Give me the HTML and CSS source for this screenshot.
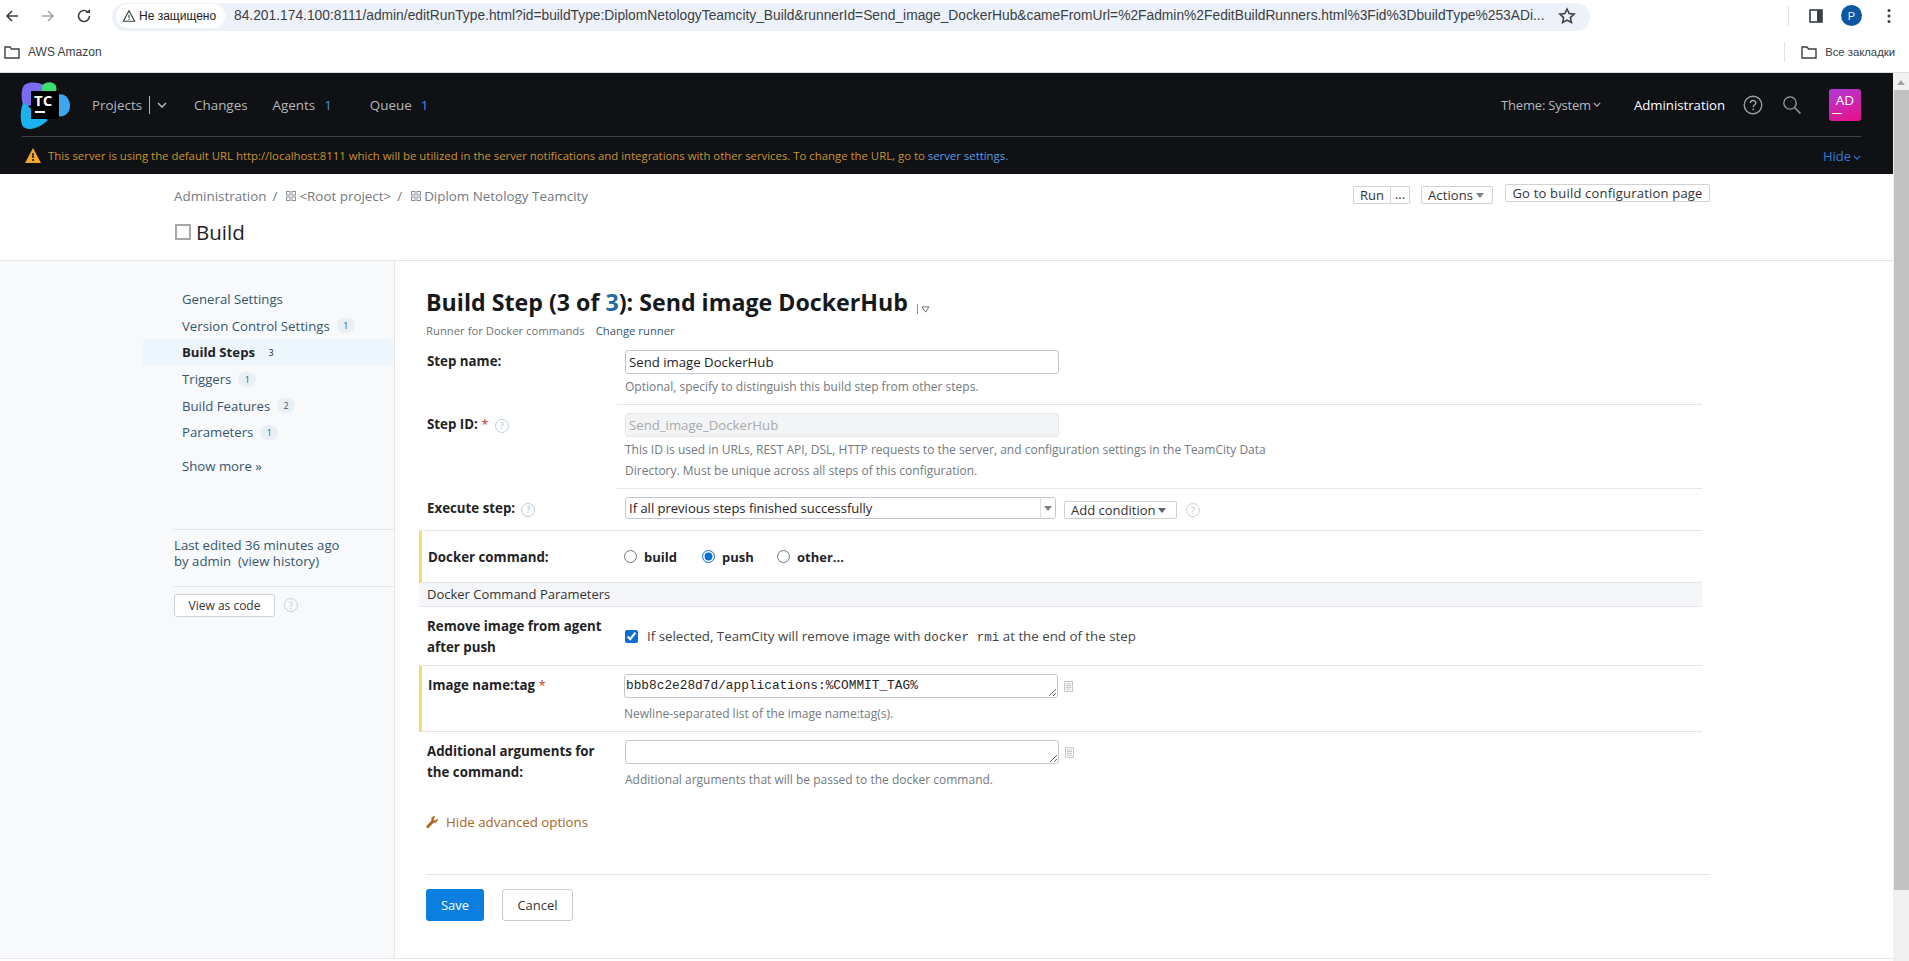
FILE: index.html
```html
<!DOCTYPE html>
<html lang="en">
<head>
    <meta charset="UTF-8">
    <meta name="viewport" content="width=device-width, initial-scale=1.0">
    <title>Build Step - TeamCity</title>
    <link rel="stylesheet" href="styles.css">
</head>
<body>
    <!-- Browser toolbar -->
    <div class="toolbar">
        <svg class="tool-icon back" viewBox="0 0 16 16"><path d="M14 8H3M8 3 3 8l5 5" fill="none" stroke="#3c4043" stroke-width="1.6"/></svg>
        <svg class="tool-icon forward" viewBox="0 0 16 16"><path d="M2 8h11M8 3l5 5-5 5" fill="none" stroke="#a5a8ac" stroke-width="1.6"/></svg>
        <svg class="tool-icon reload" viewBox="0 0 16 16"><path d="M13.5 8A5.5 5.5 0 1 1 11.8 4" fill="none" stroke="#3c4043" stroke-width="1.6"/><path d="M9.5 5h4.5V1z" fill="#3c4043"/></svg>
        <div class="omnibox">
            <div class="chip">
                <svg class="chip-icon" viewBox="0 0 16 16"><path d="M8 2 1.500 14h13zM8 6.500v4M8 11.500v1.200" fill="none" stroke="#3c4043" stroke-width="1.300"/></svg>
                <span>Не защищено</span>
            </div>
            <span class="url">84.201.174.100:8111/admin/editRunType.html?id=buildType:DiplomNetologyTeamcity_Build&amp;runnerId=Send_image_DockerHub&amp;cameFromUrl=%2Fadmin%2FeditBuildRunners.html%3Fid%3DbuildType%253ADi...</span>
            <svg class="star" viewBox="0 0 16 16"><path d="m8 1.800 1.900 4.100 4.400.5-3.300 3 .9 4.400L8 11.600l-3.900 2.200.9-4.400-3.300-3 4.400-.5z" fill="none" stroke="#3c4043" stroke-width="1.400"/></svg>
        </div>
        <div class="tool-sep"></div>
        <svg class="panel-icon" viewBox="0 0 16 16"><rect x="2" y="2" width="12" height="12" fill="none" stroke="#3c4043" stroke-width="1.600"/><rect x="9" y="2" width="5" height="12" fill="#3c4043"/></svg>
        <div class="profile">P</div>
        <svg class="dots" viewBox="0 0 4 16"><circle cx="2" cy="2.500" r="1.500"/><circle cx="2" cy="8" r="1.500"/><circle cx="2" cy="13.500" r="1.500"/></svg>
    </div>

    <!-- Bookmarks -->
    <div class="bookmarks">
        <svg class="folder" viewBox="0 0 16 14"><path d="M1 2h5l1.500 2H15v9H1z" fill="none" stroke="#3c4043" stroke-width="1.400"/></svg>
        <span class="bookmark-text">AWS Amazon</span>
        <div class="bookmarks-right">
            <div class="bookmark-sep"></div>
            <svg class="folder" viewBox="0 0 16 14"><path d="M1 2h5l1.500 2H15v9H1z" fill="none" stroke="#3c4043" stroke-width="1.400"/></svg>
            <span class="bookmark-text all">Все закладки</span>
        </div>
    </div>

    <div class="viewport">
        <div class="page">
            <!-- Dark header -->
            <header class="header">
                <div class="nav">
                    <div class="logo">
                        <svg class="logo-blobs" viewBox="0 0 50 48">
                            <path d="M3 5C5 0 15-1 24 3V20L4 25C1 18 1 10 3 5Z" fill="#7a6cf0"/>
                            <path d="M22 4C25-1 34-1 36 4 37 8 36 11 34 12H22Z" fill="#3fdc6e"/>
                            <path d="M37 13C44 10 50 16 50 24 50 31 44 36 37 34Z" fill="#3ba7ee"/>
                            <path d="M2 24 4 20 14 30 28 38C22 44 12 49 5 46 0 44 0 32 2 24Z" fill="#19b3f0"/>
                        </svg>
                        <div class="logo-box">
                            <span class="logo-text">TC</span>
                            <span class="logo-dash"></span>
                        </div>
                    </div>
                    <a class="nav-link projects">Projects</a>
                    <span class="nav-bar"></span>
                    <svg class="nav-chevron" viewBox="0 0 10 6"><path d="m1 1 4 4 4-4" fill="none" stroke="#b4b8bd" stroke-width="1.500"/></svg>
                    <a class="nav-link changes">Changes</a>
                    <a class="nav-link agents">Agents</a>
                    <span class="nav-count">1</span>
                    <a class="nav-link queue">Queue</a>
                    <span class="nav-count">1</span>
                    <div class="nav-right">
                        <a class="nav-link theme">Theme: System</a>
                        <svg class="theme-chevron" viewBox="0 0 10 6"><path d="m1 1 4 4 4-4" fill="none" stroke="#b4b8bd" stroke-width="1.400"/></svg>
                        <a class="nav-admin">Administration</a>
                        <svg class="help-icon" viewBox="0 0 20 20"><circle cx="10" cy="10" r="8.800" fill="none" stroke="#9a9ea3" stroke-width="1.400"/><path d="M7.400 8c0-3.400 5.400-3.400 5.400 0 0 2-2.600 2-2.600 4M10.200 13.600v1.600" fill="none" stroke="#9a9ea3" stroke-width="1.500"/></svg>
                        <svg class="search-icon" viewBox="0 0 20 20"><circle cx="8" cy="8" r="6.200" fill="none" stroke="#9a9ea3" stroke-width="1.300"/><path d="m12.500 12.500 6 6" stroke="#9a9ea3" stroke-width="1.500"/></svg>
                        <div class="avatar"><span>AD</span><i></i></div>
                    </div>
                </div>
                <div class="notice">
                    <svg class="notice-icon" viewBox="0 0 16 15"><path d="M8 0 16 15H0z" fill="#f2a72e"/><path d="M8 5v5M8 11v2" stroke="#1a1408" stroke-width="1.500"/></svg>
                    <span class="notice-text">This server is using the default URL http://localhost:8111 which will be utilized in the server notifications and integrations with other services. To change the URL, go to <a class="notice-link">server settings.</a></span>
                    <a class="notice-hide">Hide<svg class="hide-chevron" viewBox="0 0 10 6"><path d="m1 1 4 4 4-4" fill="none" stroke="#2f7bd8" stroke-width="1.400"/></svg></a>
                </div>
            </header>

            <!-- Breadcrumbs and title -->
            <section class="top">
                <div class="top-left">
                    <div class="crumbs">
                        <a>Administration</a><span class="slash">/</span>
                        <svg class="crumb-icon" viewBox="0 0 10 10"><g fill="none" stroke="#8b9299"><rect x=".5" y=".5" width="3.500" height="3.500"/><rect x="6" y=".5" width="3.500" height="3.500"/><rect x=".5" y="6" width="3.500" height="3.500"/><rect x="6" y="6" width="3.500" height="3.500"/></g></svg>
                        <a>&lt;Root project&gt;</a><span class="slash">/</span>
                        <svg class="crumb-icon" viewBox="0 0 10 10"><g fill="none" stroke="#8b9299"><rect x=".5" y=".5" width="3.500" height="3.500"/><rect x="6" y=".5" width="3.500" height="3.500"/><rect x=".5" y="6" width="3.500" height="3.500"/><rect x="6" y="6" width="3.500" height="3.500"/></g></svg>
                        <a>Diplom Netology Teamcity</a>
                    </div>
                    <h1 class="title"><span class="title-box"></span>Build</h1>
                </div>
                <div class="top-actions">
                    <div class="btn-group">
                        <span class="btn-small run">Run</span><span class="btn-small more">...</span>
                    </div>
                    <span class="btn-small actions">Actions<i class="caret"></i></span>
                    <span class="btn-small goto">Go to build configuration page</span>
                </div>
            </section>

            <div class="content">
                <!-- Sidebar -->
                <aside class="sidebar">
                    <ul class="side-menu">
                        <li><a>General Settings</a></li>
                        <li><a>Version Control Settings</a><span class="count">1</span></li>
                        <li class="active"><a>Build Steps</a><span class="count">3</span></li>
                        <li><a>Triggers</a><span class="count">1</span></li>
                        <li><a>Build Features</a><span class="count">2</span></li>
                        <li><a>Parameters</a><span class="count">1</span></li>
                    </ul>
                    <a class="show-more">Show more »</a>
                    <div class="edited">
                        <div>Last edited 36 minutes ago</div>
                        <div>by admin &nbsp;<a>(view history)</a></div>
                    </div>
                    <div class="code-row">
                        <span class="code-btn">View as code</span>
                        <span class="q light">?</span>
                    </div>
                </aside>

                <!-- Form -->
                <main class="main">
                    <h2 class="step-title">Build Step (3 of <span class="blue">3</span>): Send image DockerHub<span class="title-menu"><i></i><svg class="tri" viewBox="0 0 10 8"><path d="M1 1h8L5 7z" fill="none" stroke="#5a6a78"/></svg></span></h2>
                    <div class="runner"><span>Runner for Docker commands</span><a>Change runner</a></div>

                    <div class="form">
                        <div class="row row-name">
                            <div class="label">Step name:</div>
                            <div class="field lined">
                                <input class="text" type="text" value="Send image DockerHub">
                                <div class="hint">Optional, specify to distinguish this build step from other steps.</div>
                            </div>
                        </div>
                        <div class="row row-id">
                            <div class="label">Step ID: <span class="req">*</span><span class="q">?</span></div>
                            <div class="field lined">
                                <input class="text" type="text" value="Send_image_DockerHub" disabled>
                                <div class="hint">This ID is used in URLs, REST API, DSL, HTTP requests to the server, and configuration settings in the TeamCity Data Directory. Must be unique across all steps of this configuration.</div>
                            </div>
                        </div>
                        <div class="row row-exec">
                            <div class="label">Execute step:<span class="q">?</span></div>
                            <div class="field inline">
                                <div class="select"><span>If all previous steps finished successfully</span><i class="select-arrow"><b class="caret"></b></i></div>
                                <span class="btn-small add">Add condition<i class="caret dark"></i></span>
                                <span class="q">?</span>
                            </div>
                        </div>
                        <div class="row row-cmd marked">
                            <div class="label">Docker command:</div>
                            <div class="field radios">
                                <label class="radio"><input type="radio" name="cmd">build</label>
                                <label class="radio"><input type="radio" name="cmd" checked>push</label>
                                <label class="radio"><input type="radio" name="cmd">other...</label>
                            </div>
                        </div>
                        <div class="section-head">Docker Command Parameters</div>
                        <div class="row row-remove">
                            <div class="label">Remove image from agent after push</div>
                            <label class="field check"><input type="checkbox" checked><span>If selected, TeamCity will remove image with <code>docker rmi</code> at the end of the step</span></label>
                        </div>
                        <div class="row row-image marked">
                            <div class="label">Image name:tag <span class="req">*</span></div>
                            <div class="field">
                                <div class="area-wrap">
                                    <textarea class="area" rows="1">bbb8c2e28d7d/applications:%COMMIT_TAG%</textarea>
                                    <svg class="list-icon" viewBox="0 0 10 12"><path d="M.5.5h9v11h-9zM2 3h6M2 5h6M2 7h6M2 9h6" fill="none" stroke="#b9bec3"/></svg>
                                </div>
                                <div class="hint">Newline-separated list of the image name:tag(s).</div>
                            </div>
                        </div>
                        <div class="row row-args">
                            <div class="label">Additional arguments for the command:</div>
                            <div class="field">
                                <div class="area-wrap">
                                    <textarea class="area" rows="1"></textarea>
                                    <svg class="list-icon" viewBox="0 0 10 12"><path d="M.5.5h9v11h-9zM2 3h6M2 5h6M2 7h6M2 9h6" fill="none" stroke="#b9bec3"/></svg>
                                </div>
                                <div class="hint">Additional arguments that will be passed to the docker command.</div>
                            </div>
                        </div>
                    </div>

                    <a class="advanced">
                        <svg class="wrench" viewBox="0 0 12 13"><path d="M11.600 2.600 9.600 4.500 8 4.200 7.600 2.600 9.500.6C7.600-.2 5.400 1 5.300 3c0 .5 0 1 .2 1.400L.6 10c-.8 1 .6 2.800 1.800 1.900l5.200-5.200c2.400.8 4.800-1.600 4-4.100z" fill="#b5651d"/></svg>
                        Hide advanced options
                    </a>

                    <div class="buttons">
                        <span class="btn-save">Save</span>
                        <span class="btn-cancel">Cancel</span>
                    </div>
                </main>
            </div>
        </div>

        <!-- Scrollbar -->
        <div class="scrollbar">
            <svg class="scroll-up" viewBox="0 0 8 5"><path d="M4 0 8 5H0z" fill="#a3a3a3"/></svg>
            <div class="scroll-thumb"></div>
        </div>
    </div>
</body>
</html>
```
FILE: styles.css
```css
* {
    box-sizing: border-box;
}

html, body {
    margin: 0;
    height: 961px;
    overflow: hidden;
    background: #fff;
}

body {
    font-family: "Open Sans", "Noto Sans", Arial, sans-serif;
    font-size: 12px;
    color: #1f2326;
}

/* browser chrome */
.toolbar {
    height: 31px;
    display: flex;
    align-items: center;
    background: #fff;
    font-family: "Liberation Sans", Arial, sans-serif;
}

.tool-icon {
    width: 16px;
    height: 16px;
    flex: none;
}

.back {
    margin-left: 4px;
}

.forward {
    margin-left: 20px;
}

.reload {
    margin-left: 20px;
}

.omnibox {
    width: 1478px;
    height: 28px;
    margin: 3px 0 0 20px;
    background: #edf2fa;
    border-radius: 14px;
    display: flex;
    align-items: center;
    padding: 0 0 3px 4px;
}

.chip {
    width: 109px;
    height: 24px;
    background: #fff;
    border-radius: 12px;
    display: flex;
    align-items: center;
    gap: 3px;
    padding-left: 6px;
    font-size: 12px;
    color: #202124;
    flex: none;
}

.chip-icon {
    width: 14px;
    height: 14px;
}

.url {
    margin-left: 9px;
    font-size: 13.800px;
    color: #3c4043;
    white-space: nowrap;
    flex: none;
}

.star {
    width: 18px;
    height: 18px;
    margin-left: auto;
    margin-right: 14px;
    flex: none;
}

.tool-sep {
    width: 1px;
    height: 20px;
    background: #e0e2e5;
    margin-left: 198px;
}

.panel-icon {
    width: 16px;
    height: 16px;
    margin-left: 19px;
}

.profile {
    width: 21px;
    height: 21px;
    border-radius: 50%;
    background: #0b57a4;
    color: #e8f0fe;
    font-size: 11px;
    display: flex;
    align-items: center;
    justify-content: center;
    margin-left: 17px;
}

.dots {
    width: 4px;
    height: 16px;
    margin-left: 25px;
    fill: #3c4043;
}

.bookmarks {
    height: 42px;
    display: flex;
    align-items: center;
    padding-left: 4px;
    font-family: "Liberation Sans", Arial, sans-serif;
    border-bottom: 1px solid #dadce0;
}

.folder {
    width: 16px;
    height: 14px;
    flex: none;
}

.bookmark-text {
    margin-left: 8px;
    font-size: 12px;
    color: #3c4043;
    white-space: nowrap;
}

.bookmark-text.all {
    font-size: 11.300px;
}

.bookmarks-right {
    margin-left: auto;
    display: flex;
    align-items: center;
    padding-right: 14px;
}

.bookmark-sep {
    width: 1px;
    height: 20px;
    background: #e0e2e5;
    margin-right: 16px;
}

.viewport {
    height: 888px;
    display: flex;
}

.page {
    width: 1893px;
    flex: none;
}

.scrollbar {
    width: 16px;
    flex: none;
    background: #f1f1f1;
    display: flex;
    flex-direction: column;
    align-items: center;
}

.scroll-up {
    width: 8px;
    height: 5px;
    margin-top: 7px;
}

.scroll-thumb {
    width: 15px;
    height: 800px;
    margin-top: 5px;
    background: #c1c1c1;
}

/* dark header */
.header {
    height: 101px;
    background: #0f1114;
    padding: 0 32px 0 22px;
}

.nav {
    height: 64px;
    display: flex;
    align-items: center;
    border-bottom: 1px solid #3e4145;
    font-size: 13.400px;
}

.logo {
    position: relative;
    width: 50px;
    height: 48px;
    margin-left: -2px;
    margin-top: 2px;
}

.logo-blobs {
    width: 50px;
    height: 48px;
}

.logo-box {
    position: absolute;
    left: 11px;
    top: 9px;
    width: 28px;
    height: 28px;
    background: #000;
    padding: 2px 0 0 3px;
}

.logo-text {
    display: block;
    color: #fff;
    font-size: 15px;
    line-height: 15px;
    font-weight: 700;
}

.logo-dash {
    display: block;
    width: 10px;
    height: 2px;
    margin: 3px 0 0 1px;
    background: #fff;
}

.nav-link {
    color: #b4b8bd;
    white-space: nowrap;
}

.projects {
    margin-left: 22px;
}

.nav-bar {
    width: 1px;
    height: 18px;
    background: #b4b8bd;
    margin-left: 7px;
}

.nav-chevron {
    width: 10px;
    height: 6px;
    margin-left: 7px;
}

.changes {
    margin-left: 27px;
}

.agents {
    margin-left: 25px;
}

.queue {
    margin-left: 38px;
}

.nav-count {
    color: #4a8fe0;
    margin-left: 9px;
}

.nav-right {
    margin-left: auto;
    display: flex;
    align-items: center;
}

.theme {
    font-size: 13px;
    letter-spacing: -.2px;
}

.theme-chevron {
    width: 8px;
    height: 5px;
    margin-left: 2px;
}

.nav-admin {
    color: #fff;
    font-size: 13.200px;
    margin-left: 33px;
    white-space: nowrap;
}

.help-icon {
    width: 20px;
    height: 20px;
    margin-left: 18px;
}

.search-icon {
    width: 20px;
    height: 20px;
    margin-left: 19px;
}

.avatar {
    position: relative;
    width: 32px;
    height: 32px;
    margin-left: 27px;
    border-radius: 3px;
    background: linear-gradient(160deg, #b03ad6, #e80f86);
    color: #fff;
    font-size: 13.500px;
    font-weight: 500;
    text-align: center;
    line-height: 23px;
}

.avatar i {
    position: absolute;
    left: 3px;
    top: 24px;
    width: 10px;
    height: 1px;
    background: #fff;
}

.notice {
    height: 36px;
    display: flex;
    align-items: center;
    font-size: 11.370px;
    padding-left: 3px;
}

.notice-icon {
    width: 16px;
    height: 15px;
    flex: none;
}

.notice-text {
    margin-left: 7px;
    color: #c99333;
    white-space: nowrap;
}

.notice-link {
    color: #5a9be0;
}

.notice-hide {
    margin-left: auto;
    padding-top: 2px;
    color: #2f7bd8;
    font-size: 13px;
    display: flex;
    align-items: center;
}

.hide-chevron {
    width: 8px;
    height: 5px;
    margin-left: 2px;
    margin-top: 2px;
}

/* breadcrumbs */
.top {
    height: 87px;
    display: flex;
    padding-left: 174px;
    border-bottom: 1px solid #e4e6e9;
}

.top-left {
    flex: 1;
}

.crumbs {
    display: flex;
    align-items: center;
    margin-top: 13px;
    height: 18px;
    font-size: 13.400px;
    color: #737a80;
    white-space: nowrap;
}

.slash {
    margin: 0 7px 0 6px;
}

.crumb-icon {
    width: 10px;
    height: 10px;
    margin: 0 3px 0 2px;
}

.title {
    display: flex;
    align-items: center;
    margin: 13px 0 0;
    font-size: 20.500px;
    font-weight: 400;
    line-height: 28px;
    color: #1f2326;
}

.title-box {
    width: 16px;
    height: 16px;
    border: 2px solid #a5a8ab;
    margin: 0 5px 0 1px;
}

.top-actions {
    display: flex;
    align-items: flex-start;
    padding: 10px 183px 0 0;
}

.btn-small {
    display: inline-flex;
    align-items: center;
    height: 18px;
    padding: 0 6px;
    background: #fff;
    border: 1px solid #cfd3d6;
    border-radius: 2px;
    font-size: 13px;
    color: #333;
    white-space: nowrap;
}

.btn-group {
    display: flex;
    margin-top: 2px;
}

.run {
    width: 38px;
    border-radius: 2px 0 0 2px;
    justify-content: center;
}

.more {
    width: 19px;
    padding: 0 0 3px;
    border-left: 0;
    border-radius: 0 2px 2px 0;
    justify-content: center;
}

.actions {
    margin: 2px 0 0 11px;
    width: 72px;
    letter-spacing: .1px;
}

.goto {
    margin-left: 12px;
    width: 205px;
    justify-content: center;
    letter-spacing: .2px;
}

.caret {
    display: inline-block;
    border: 4px solid transparent;
    border-top: 5px solid #7b8187;
    border-bottom: 0;
    margin-left: 3px;
}

.caret.dark {
    border-top-color: #5c6167;
}

/* sidebar + form */
.content {
    display: flex;
    height: 698px;
    border-bottom: 1px solid #e4e6e9;
}

.sidebar {
    width: 395px;
    flex: none;
    padding: 25px 0 0 174px;
    background: #f7f9fb;
    border-right: 1px solid #e4e6e9;
}

.side-menu {
    list-style: none;
    margin: 0 0 0 -31px;
    padding: 0;
    font-size: 13.200px;
    color: #36566e;
}

.side-menu li {
    height: 26.600px;
    display: flex;
    align-items: center;
    padding-left: 39px;
    white-space: nowrap;
}

.side-menu li.active {
    background: #eef6fd;
    color: #1f2326;
    font-weight: 700;
}

.count {
    margin-left: 7px;
    min-width: 18px;
    height: 15px;
    padding: 0 5px;
    border-radius: 8px;
    background: #e8f0f6;
    font-size: 9px;
    line-height: 15px;
    text-align: center;
    font-weight: 400;
}

.active .count {
    background: transparent;
    color: #1f2326;
}

.show-more {
    display: block;
    margin: 11px 0 0 8px;
    font-size: 13.200px;
    line-height: 18px;
    color: #36566e;
}

.edited {
    margin-top: 54px;
    border-top: 1px solid #e4e6e9;
    border-bottom: 1px solid #e4e6e9;
    padding: 7px 0 17px;
    font-size: 13.200px;
    line-height: 16px;
    color: #36566e;
    white-space: nowrap;
}

.code-row {
    display: flex;
    align-items: center;
    margin-top: 7px;
}

.code-btn {
    width: 101px;
    height: 23px;
    border: 1px solid #cfd3d6;
    border-radius: 3px;
    background: #fff;
    display: flex;
    align-items: center;
    justify-content: center;
    font-size: 12px;
    color: #333;
}

.q {
    display: inline-flex;
    align-items: center;
    justify-content: center;
    width: 14px;
    height: 14px;
    margin-left: 6px;
    border: 1px solid #b9d0dd;
    border-radius: 50%;
    font-size: 9px;
    font-weight: 400;
    color: #9dbccb;
    flex: none;
}

.q.light {
    margin-left: 9px;
    border-color: #ccd2d6;
    color: #bcc3c8;
}

.main {
    flex: 1;
    padding: 0 0 0 24px;
    min-width: 0;
}

.step-title {
    margin: 25px 0 0 7px;
    font-size: 23.200px;
    line-height: 33px;
    font-weight: 700;
    color: #16191c;
    white-space: nowrap;
}

.blue {
    color: #236a9e;
}

.title-menu {
    display: inline-flex;
    align-items: center;
    margin-left: 9px;
    vertical-align: -3px;
}

.title-menu i {
    width: 1px;
    height: 10px;
    background: #8b9299;
    margin-right: 3px;
}

.tri {
    width: 9px;
    height: 7px;
}

.runner {
    margin: 4px 0 0 7px;
    height: 16px;
    font-size: 11.300px;
    line-height: 16px;
    color: #6c7277;
}

.runner a {
    color: #36566e;
    margin-left: 11px;
}

.form {
    width: 1283px;
    font-size: 12px;
}

.row {
    display: flex;
    padding-left: 1px;
    border-bottom: 1px solid #e4e6e9;
}

.label {
    width: 198px;
    margin-left: 7px;
    padding: 1px 16px 0 0;
    flex: none;
    font-size: 13.300px;
    line-height: 21px;
    font-weight: 700;
    color: #1f2326;
}

.req {
    color: #c0392b;
    font-weight: 400;
}

.field {
    flex: 1;
    min-width: 0;
}

/* first two rows draw their rule under the field only */
.lined {
    margin-left: -8px;
    padding-left: 8px;
    border-bottom: 1px solid #e4e6e9;
}

.text {
    display: block;
    width: 434px;
    height: 24px;
    padding: 0 3px;
    font: 13.200px "Open Sans", "Noto Sans", sans-serif;
    color: #1f2326;
    border: 1px solid #c4c8cc;
    border-radius: 3px;
    background: #fff;
}

.text:disabled {
    background: #f3f4f5;
    border-color: #e4e6e8;
    color: #a8abae;
}

.hint {
    margin-top: 2px;
    width: 660px;
    font-size: 12px;
    line-height: 21px;
    color: #737a80;
}

.row-name {
    margin-top: 11px;
    height: 55px;
    border-bottom: 0;
}

.row-id {
    height: 84px;
    padding-top: 8px;
    border-bottom: 0;
}

.row-exec {
    height: 42px;
    padding-top: 8px;
}

.inline {
    display: flex;
    align-items: flex-end;
    height: 22px;
}

.select {
    width: 431px;
    height: 22px;
    border: 1px solid #c4c8cc;
    border-radius: 3px;
    display: flex;
    align-items: center;
    justify-content: space-between;
    padding-left: 3px;
    font-size: 13px;
}

.select-arrow {
    width: 15px;
    height: 20px;
    border-left: 1px solid #dfe2e4;
    display: flex;
    align-items: center;
    justify-content: center;
}

.select-arrow .caret {
    margin: 0;
}

.add {
    margin-left: 8px;
    width: 113px;
}

.inline .q {
    margin: 0 0 2px 9px;
    border-color: #ccd2d6;
    color: #bcc3c8;
}

.marked {
    border-left: 3px solid #f4dc74;
    padding-left: 6px;
}

.row-cmd {
    height: 52px;
    align-items: center;
}

.marked .label {
    width: 196px;
    margin-left: 0;
}

.row-cmd .label,
.row-remove .label {
    padding-top: 2px;
}

.radios {
    display: flex;
    font-size: 13px;
    font-weight: 700;
}

.radio {
    display: flex;
    align-items: center;
}

.radio input {
    width: 13px;
    height: 13px;
    margin: 0 7px 0 0;
    accent-color: #0b6fd6;
}

.radio:nth-child(1) {
    width: 78px;
}

.radio:nth-child(2) {
    width: 75px;
}

.section-head {
    height: 24px;
    padding-left: 8px;
    background: #f4f6f9;
    border-bottom: 1px solid #e4e6e9;
    font-size: 13px;
    line-height: 23px;
    color: #333;
}

.row-remove {
    height: 59px;
    align-items: center;
}

.check {
    display: flex;
    align-items: center;
    font-size: 13.300px;
    color: #444;
}

.check input {
    width: 13px;
    height: 13px;
    margin: 0 9px 0 0;
    accent-color: #0b6fd6;
}

code {
    font-family: "Liberation Mono", monospace;
    font-size: 12.600px;
}

.row-image {
    height: 66px;
    padding-top: 8px;
}

.row-args {
    height: 68px;
    padding-top: 8px;
    border-bottom: 0;
}

.area-wrap {
    display: flex;
    align-items: center;
    height: 24px;
    margin-bottom: 5px;
}

.area {
    display: block;
    width: 434px;
    height: 24px;
    padding: 2px 1px;
    resize: vertical;
    font: 12.800px/18px "Liberation Mono", monospace;
    color: #1f2326;
    border: 1px solid #c4c8cc;
    border-radius: 3px;
    overflow: hidden;
}

.list-icon {
    width: 9px;
    height: 11px;
    margin-left: 6px;
}

.advanced {
    display: flex;
    align-items: center;
    margin: 13px 0 0 7px;
    font-size: 13.300px;
    line-height: 18px;
    color: #a9651c;
}

.wrench {
    width: 12px;
    height: 13px;
    margin-right: 8px;
}

.buttons {
    display: flex;
    align-items: center;
    margin: 43px 0 0 7px;
    width: 1284px;
    padding-top: 14px;
    border-top: 1px solid #e4e6e9;
}

.btn-save {
    width: 58px;
    height: 32px;
    background: #0a7fe0;
    color: #fff;
    border-radius: 3px;
    display: flex;
    align-items: center;
    justify-content: center;
    font-size: 13px;
}

.btn-cancel {
    width: 71px;
    height: 32px;
    margin-left: 18px;
    border: 1px solid #c9cdd0;
    border-radius: 3px;
    color: #333;
    display: flex;
    align-items: center;
    justify-content: center;
    font-size: 13px;
}
```
